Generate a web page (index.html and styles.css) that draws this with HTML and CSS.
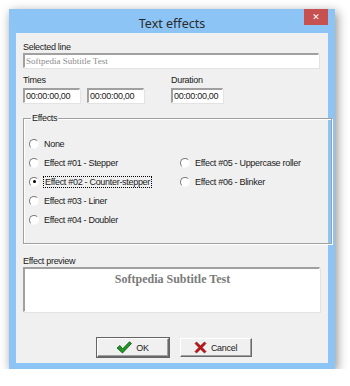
FILE: index.html
```html
<!DOCTYPE html>
<html lang="en">
<head>
    <meta charset="UTF-8">
    <title>Text effects</title>
    <link rel="stylesheet" href="styles.css">
</head>
<body>
    <div class="window">
        <div class="titlebar">
            <span></span>
            <span class="title">Text effects</span>
            <span class="close">&#x2715;</span>
        </div>

        <div class="content">
            <div class="label first">Selected line</div>
            <div class="field wide serif">Softpedia Subtitle Test</div>

            <div class="times">
                <div class="group">
                    <div class="label">Times</div>
                    <div class="row">
                        <div class="field time">00:00:00,00</div>
                        <div class="field time">00:00:00,00</div>
                    </div>
                </div>
                <div class="group">
                    <div class="label">Duration</div>
                    <div class="field dur">00:00:00,00</div>
                </div>
            </div>

            <fieldset class="effects">
                <legend>Effects</legend>
                <div class="cols">
                    <div class="col">
                        <div class="radio"><span class="dot"></span>None</div>
                        <div class="radio"><span class="dot"></span>Effect #01 - Stepper</div>
                        <div class="radio"><span class="dot on"></span><span class="focus">Effect #02 - Counter-stepper</span></div>
                        <div class="radio"><span class="dot"></span>Effect #03 - Liner</div>
                        <div class="radio"><span class="dot"></span>Effect #04 - Doubler</div>
                    </div>
                    <div class="col right">
                        <div class="radio"><span class="dot"></span>Effect #05 - Uppercase roller</div>
                        <div class="radio"><span class="dot"></span>Effect #06 - Blinker</div>
                    </div>
                </div>
            </fieldset>

            <div class="label preview-label">Effect preview</div>
            <div class="field preview">Softpedia Subtitle Test</div>

            <div class="buttons">
                <div class="btn default">
                    <svg width="16" height="13" viewBox="0 0 16 13">
                        <path d="M1 7 L4 4.5 L6.5 8 L13.5 0.8 L15.5 2.5 L6.5 12 Z" fill="#1c9a22" stroke="#0b4d10" stroke-width="0.8" stroke-linejoin="round"/>
                    </svg>
                    <span>OK</span>
                </div>
                <div class="btn">
                    <svg width="13" height="13" viewBox="0 0 13 13">
                        <path d="M1 2.5 L2.5 1 L6.5 4.8 L10.5 1 L12 2.5 L8.2 6.5 L12 10.5 L10.5 12 L6.5 8.2 L2.5 12 L1 10.5 L4.8 6.5 Z" fill="#c3121a" stroke="#6d0a0e" stroke-width="0.6" stroke-linejoin="round"/>
                    </svg>
                    <span>Cancel</span>
                </div>
            </div>
        </div>
    </div>
</body>
</html>
```

FILE: styles.css
```css
body {
    margin: 0;
    background: #ffffff;
    font-family: 'Liberation Sans', Arial, sans-serif;
    font-size: 9px;
    letter-spacing: -0.3px;
    color: #1a1a1a;
}

.window {
    margin: 9px 0 0 9px;
    width: 326px;
    height: 360px;
    background: #8cc5f5;
    box-shadow: 2px 3px 10px rgba(0, 0, 0, 0.45);
    display: flex;
    flex-direction: column;
}

.titlebar {
    height: 24px;
    display: grid;
    grid-template-columns: 1fr auto 1fr;
    align-items: start;
}

.title {
    font-family: 'Noto Sans', sans-serif;
    font-size: 12.5px;
    letter-spacing: 0;
    color: #2a2a2a;
    line-height: 29px;
}

.close {
    justify-self: end;
    margin-right: 7px;
    width: 24px;
    height: 16px;
    background: #c75050;
    color: #ffffff;
    font-family: 'DejaVu Sans', sans-serif;
    font-size: 9px;
    font-weight: bold;
    letter-spacing: 0;
    text-align: center;
    line-height: 16px;
}

.content {
    margin: 0 7px 6px 7px;
    flex: 1;
    background: #f0f0f0;
    padding: 0 9px 0 7px;
}

.label {
    height: 11px;
    line-height: 11px;
}

.label.first {
    margin-top: 9px;
}

.field {
    background: #ffffff;
    border-style: solid;
    border-width: 2px 1px 1px 2px;
    border-color: #a0a0a0 #ffffff #ffffff #a0a0a0;
    box-shadow: 1px 1px 0 #e3e3e3;
    height: 12px;
    line-height: 12px;
    padding-left: 1px;
    white-space: nowrap;
    overflow: hidden;
}

.wide {
    margin-top: 0;
    width: 292px;
}

.serif {
    font-family: 'Liberation Serif', serif;
    font-size: 9px;
    letter-spacing: 0;
    color: #8c8c8c;
}

.times {
    display: flex;
    margin-top: 7px;
}

.times .label {
    margin-bottom: 2px;
}

.row {
    display: flex;
    gap: 7px;
}

.group {
    width: 151px;
}

.time {
    width: 53px;
}

.dur {
    width: 48px;
}

.effects {
    margin: 10px 0 0 0;
    padding: 10px 0 0 5px;
    height: 119px;
    border: 1px solid #a0a0a0;
    box-shadow: 1px 1px 0 #ffffff, inset 1px 1px 0 #ffffff;
    width: 290px;
}

.effects legend {
    padding: 0 1px;
    margin-left: 2px;
    line-height: 11px;
}

.cols {
    display: flex;
}

.col {
    display: flex;
    flex-direction: column;
    width: 151px;
}

.col.right {
    padding-top: 19px;
}

.radio {
    height: 19px;
    display: flex;
    align-items: center;
    gap: 5px;
}

.dot {
    width: 8px;
    height: 8px;
    border-radius: 50%;
    background: #ffffff;
    border: 1px solid;
    border-color: #7a7a7a #f8f8f8 #f8f8f8 #7a7a7a;
    display: flex;
    align-items: center;
    justify-content: center;
}

.dot.on::after {
    content: "";
    width: 3px;
    height: 3px;
    border-radius: 50%;
    background: #000000;
}

.focus {
    outline: 1px dotted #000000;
    outline-offset: 0;
    padding: 0 1px;
}

.preview-label {
    margin-top: 12px;
}

.preview {
    width: 293px;
    height: 42px;
    margin-top: 0;
    text-align: center;
    font-family: 'Liberation Serif', serif;
    font-size: 12px;
    font-weight: bold;
    letter-spacing: 0;
    color: #7a7a7a;
    line-height: 20px;
}

.buttons {
    display: flex;
    justify-content: center;
    gap: 11px;
    margin-top: 26px;
    padding-left: 6px;
}

.btn {
    width: 70px;
    height: 17px;
    display: flex;
    align-items: center;
    justify-content: center;
    gap: 4px;
    background: #f0f0f0;
    border: 1px solid;
    border-color: #ffffff #696969 #696969 #ffffff;
    box-shadow: inset -1px -1px 0 #a0a0a0;
    font-family: 'Liberation Sans Narrow', 'Liberation Sans', sans-serif;
}

.btn.default {
    outline: 1px solid #646464;
}
```
